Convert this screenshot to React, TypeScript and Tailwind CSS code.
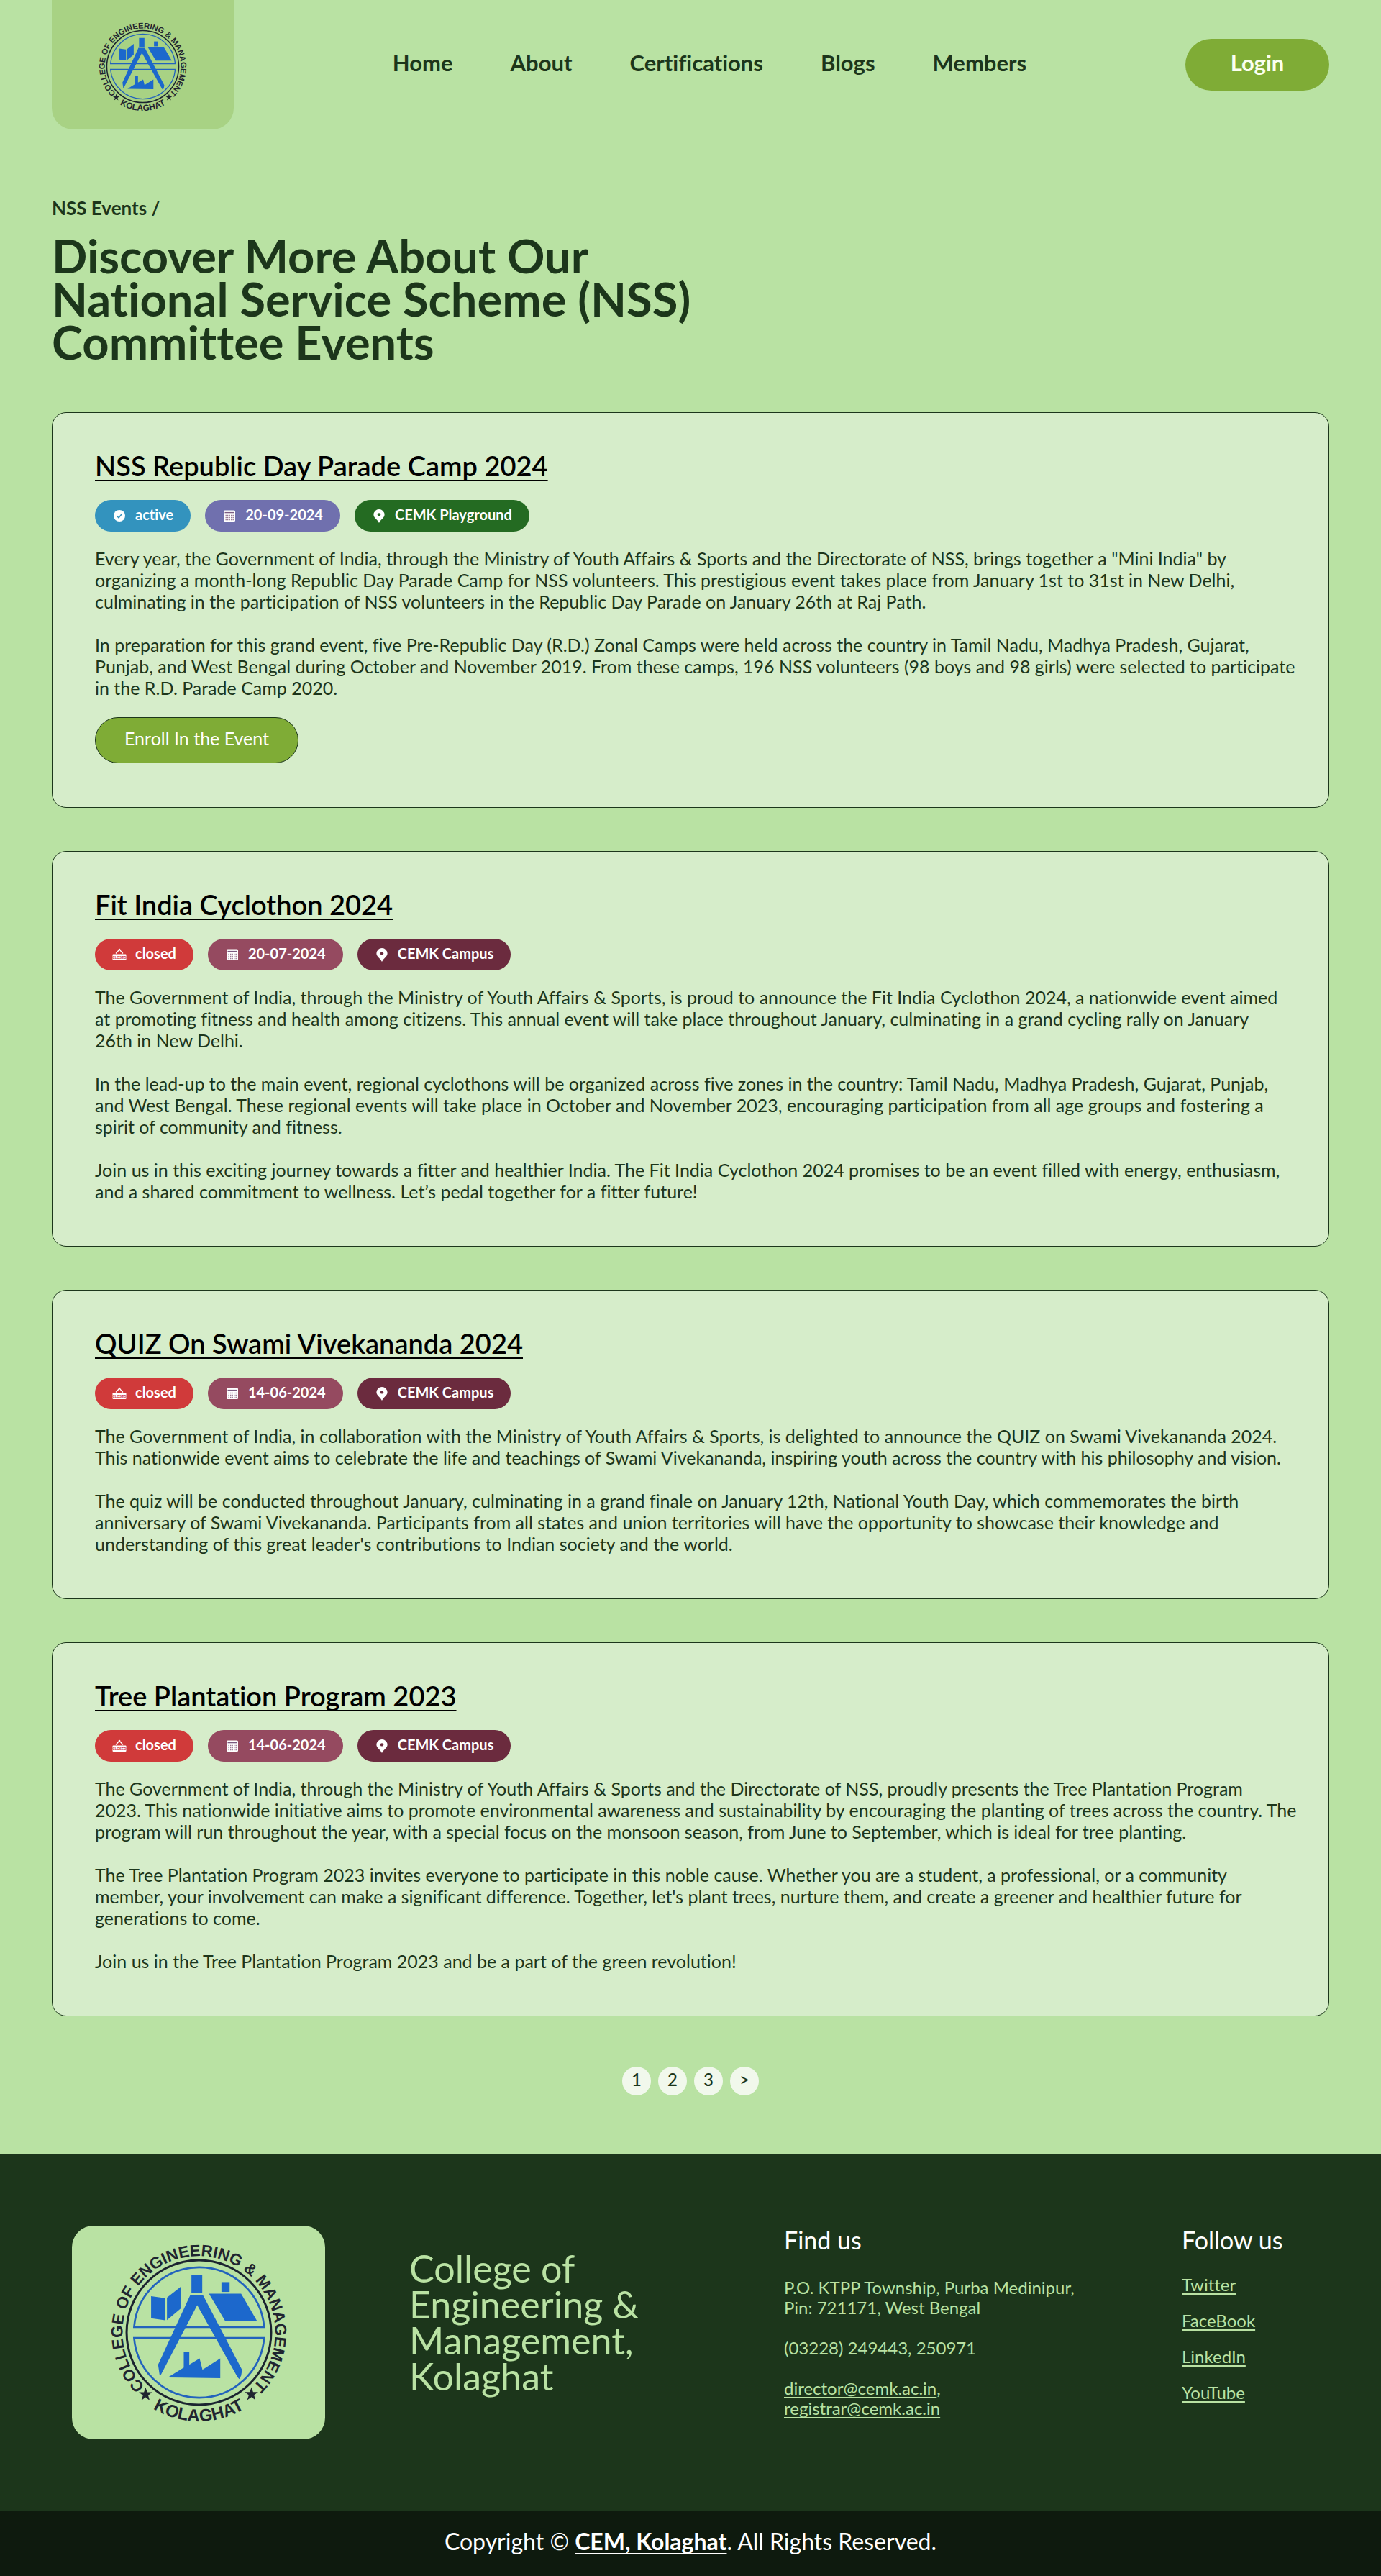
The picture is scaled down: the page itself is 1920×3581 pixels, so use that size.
import type { ReactNode } from 'react'

type EventItem = {
  title: string
  open: boolean
  date: string
  place: string
  paragraphs: string[]
}

const events: EventItem[] = [
  {
    title: 'NSS Republic Day Parade Camp 2024',
    open: true,
    date: '20-09-2024',
    place: 'CEMK Playground',
    paragraphs: [
      'Every year, the Government of India, through the Ministry of Youth Affairs & Sports and the Directorate of NSS, brings together a "Mini India" by\norganizing a month-long Republic Day Parade Camp for NSS volunteers. This prestigious event takes place from January 1st to 31st in New Delhi,\nculminating in the participation of NSS volunteers in the Republic Day Parade on January 26th at Raj Path.',
      'In preparation for this grand event, five Pre-Republic Day (R.D.) Zonal Camps were held across the country in Tamil Nadu, Madhya Pradesh, Gujarat,\nPunjab, and West Bengal during October and November 2019. From these camps, 196 NSS volunteers (98 boys and 98 girls) were selected to participate\nin the R.D. Parade Camp 2020.',
    ],
  },
  {
    title: 'Fit India Cyclothon 2024',
    open: false,
    date: '20-07-2024',
    place: 'CEMK Campus',
    paragraphs: [
      'The Government of India, through the Ministry of Youth Affairs & Sports, is proud to announce the Fit India Cyclothon 2024, a nationwide event aimed\nat promoting fitness and health among citizens. This annual event will take place throughout January, culminating in a grand cycling rally on January\n26th in New Delhi.',
      'In the lead-up to the main event, regional cyclothons will be organized across five zones in the country: Tamil Nadu, Madhya Pradesh, Gujarat, Punjab,\nand West Bengal. These regional events will take place in October and November 2023, encouraging participation from all age groups and fostering a\nspirit of community and fitness.',
      'Join us in this exciting journey towards a fitter and healthier India. The Fit India Cyclothon 2024 promises to be an event filled with energy, enthusiasm,\nand a shared commitment to wellness. Let’s pedal together for a fitter future!',
    ],
  },
  {
    title: 'QUIZ On Swami Vivekananda 2024',
    open: false,
    date: '14-06-2024',
    place: 'CEMK Campus',
    paragraphs: [
      'The Government of India, in collaboration with the Ministry of Youth Affairs & Sports, is delighted to announce the QUIZ on Swami Vivekananda 2024.\nThis nationwide event aims to celebrate the life and teachings of Swami Vivekananda, inspiring youth across the country with his philosophy and vision.',
      "The quiz will be conducted throughout January, culminating in a grand finale on January 12th, National Youth Day, which commemorates the birth\nanniversary of Swami Vivekananda. Participants from all states and union territories will have the opportunity to showcase their knowledge and\nunderstanding of this great leader's contributions to Indian society and the world.",
    ],
  },
  {
    title: 'Tree Plantation Program 2023',
    open: false,
    date: '14-06-2024',
    place: 'CEMK Campus',
    paragraphs: [
      'The Government of India, through the Ministry of Youth Affairs & Sports and the Directorate of NSS, proudly presents the Tree Plantation Program\n2023. This nationwide initiative aims to promote environmental awareness and sustainability by encouraging the planting of trees across the country. The\nprogram will run throughout the year, with a special focus on the monsoon season, from June to September, which is ideal for tree planting.',
      "The Tree Plantation Program 2023 invites everyone to participate in this noble cause. Whether you are a student, a professional, or a community\nmember, your involvement can make a significant difference. Together, let's plant trees, nurture them, and create a greener and healthier future for\ngenerations to come.",
      'Join us in the Tree Plantation Program 2023 and be a part of the green revolution!',
    ],
  },
]

function Logo({ id, className }: { id: string; className: string }) {
  return (
    <svg viewBox="189 126 800 800" className={className} role="img" aria-label="College of Engineering & Management, Kolaghat">
      <defs>
        <path id={`${id}-top`} d="M589 844 A318 318 0 0 1 589 208 A318 318 0 0 1 589 844" />
        <path id={`${id}-bottom`} d="M219 526 A370 370 0 0 0 959 526" />
      </defs>
      <circle cx="589" cy="526" r="301" fill="none" stroke="#1b2430" strokeWidth="9" />
      <g fill="none" stroke="#2263bd" strokeWidth="8">
        <path d="M319 503 H861 A272 272 0 0 0 319 503 Z" />
        <path d="M319 549 H861 A272 272 0 0 1 319 549 Z" />
      </g>
      <g fill="#1c68cc">
        <path d="M558 287 H603 V361 H558 Z" />
        <path d="M553 370 H606 L769 682 L765 706 L757 720 L750 712 L582 412 L432 700 L426 707 L419 660 Z" />
        <path d="M390 375 L449 383 V475 L390 467 Z" />
        <path d="M456 381 L513 336 V426 L456 474 Z" />
        <path d="M631 364 H765 L831 477 H698 Z" />
        <path d="M683 316 H717 V357 H683 Z" />
        <path d="M463 711 L526 672 V606 H549 V660 L592 634 L604 681 L678 634 V716 L463 713 Z" />
      </g>
      <g fill="#1f2530">
        <path d="M367 755 L374 775 L394 775 L378 788 L384 809 L367 796 L349 809 L356 788 L339 775 L360 775 Z" />
        <path d="M808 754 L815 774 L836 774 L819 787 L825 808 L808 795 L790 808 L797 787 L780 774 L801 774 Z" />
        <g fontFamily="'Liberation Sans', Arial, sans-serif" fontWeight="700" textAnchor="middle">
          <text fontSize="67">
            <textPath href={`#${id}-top`} startOffset="50%">COLLEGE OF ENGINEERING &amp; MANAGEMENT</textPath>
          </text>
          <text fontSize="72">
            <textPath href={`#${id}-bottom`} startOffset="50%">KOLAGHAT</textPath>
          </text>
        </g>
      </g>
    </svg>
  )
}

function CheckIcon() {
  return (
    <svg viewBox="0 0 20 20" className="size-5" aria-hidden="true">
      <circle cx="10" cy="10" r="8" fill="#fff" />
      <path d="M6.5 10.3 L9 12.8 L13.8 7" fill="none" stroke="#3393be" strokeWidth="1.5" />
    </svg>
  )
}

function ClosedIcon() {
  return (
    <svg viewBox="0 0 20 20" className="size-5" aria-hidden="true">
      <path d="M5 8.5 L10 3 L15 8.5" fill="none" stroke="#fff" strokeWidth="1.2" />
      <circle cx="10" cy="3" r="1.3" fill="#fff" />
      <rect x="0.5" y="9.5" width="19" height="8.5" rx="1" fill="#fff" />
      <text x="10" y="15.6" textAnchor="middle" fontSize="4.6" fontWeight="700" fontFamily="'Liberation Sans', Arial, sans-serif" fill="#d03a3a">
        CLOSED
      </text>
    </svg>
  )
}

function CalendarIcon() {
  return (
    <svg viewBox="0 0 20 20" className="size-5" aria-hidden="true">
      <rect x="2" y="2.5" width="16" height="15.5" rx="1.5" fill="#fff" />
      <path d="M3.5 5.6 H16.5" stroke="#7a5a80" strokeWidth="1.4" />
      <path d="M4.5 9.5 H16 M4.5 12.5 H16 M4.5 15.5 H16" stroke="#9a7a94" strokeWidth="1.4" strokeDasharray="1.4 1.1" />
    </svg>
  )
}

function PinIcon({ hole }: { hole: string }) {
  return (
    <svg viewBox="0 0 20 20" className="size-5" aria-hidden="true">
      <path d="M10 1 A7.6 7.6 0 0 1 17.6 8.6 C17.6 12.6 13 14.5 10 20 C7 14.5 2.4 12.6 2.4 8.6 A7.6 7.6 0 0 1 10 1 Z" fill="#fff" />
      <circle cx="10" cy="8.4" r="2.2" fill={hole} />
    </svg>
  )
}

function Pill({ icon, color, children }: { icon: ReactNode; color: string; children: ReactNode }) {
  return (
    <li className={`flex h-11 items-center gap-3 rounded-full px-6 text-xl font-bold text-white ${color}`}>
      {icon}
      <span className="pb-1">{children}</span>
    </li>
  )
}

function EventCard({ event }: { event: EventItem }) {
  return (
    <article className="rounded-[20px] border border-[#1c361b] bg-[#d6edca] pt-[53px] pr-8 pb-[61px] pl-[59px]">
      <h2 className="text-[38px] leading-10 font-semibold text-black">
        <a href="#" className="underline decoration-2 underline-offset-[5px] [text-decoration-skip-ink:none]">
          {event.title}
        </a>
      </h2>
      <ul className="mt-7 flex flex-wrap gap-5">
        <Pill icon={event.open ? <CheckIcon /> : <ClosedIcon />} color={event.open ? 'bg-[#3393be]' : 'bg-[#d03a3a]'}>
          {event.open ? 'active' : 'closed'}
        </Pill>
        <Pill icon={<CalendarIcon />} color={event.open ? 'bg-[#7070ae]' : 'bg-[#954a60]'}>
          {event.date}
        </Pill>
        <Pill icon={<PinIcon hole={event.open ? '#246b22' : '#6b2b3e'} />} color={event.open ? 'bg-[#246b22]' : 'bg-[#6b2b3e]'}>
          {event.place}
        </Pill>
      </ul>
      <div className="mt-[22px] flex flex-col gap-[30px] text-[25px] leading-[30px] whitespace-pre-line">
        {event.paragraphs.map((p) => (
          <p key={p}>{p}</p>
        ))}
      </div>
      {event.open && (
        <button className="mt-[26px] flex h-16 items-center rounded-full border border-[#1c361b] bg-[#7fac36] px-10 pb-1 text-[25px] text-white">
          Enroll In the Event
        </button>
      )}
    </article>
  )
}

const linkClass = 'underline underline-offset-[3px] [text-decoration-skip-ink:none]'

export default function App() {
  return (
    <div className="bg-[#b9e2a3] font-['Lato',sans-serif] text-[#1c361b] [font-variant-ligatures:none]">
      <header className="flex items-center justify-between px-[72px]">
        <a href="#" className="flex h-[180px] w-[253px] items-center justify-center rounded-b-[30px] bg-[#a8d284] pt-1">
          <Logo id="header-logo" className="size-[133px]" />
        </a>
        <nav className="flex gap-20 pb-1.5 text-[31px] leading-10 font-bold">
          <a href="#">Home</a>
          <a href="#">About</a>
          <a href="#">Certifications</a>
          <a href="#">Blogs</a>
          <a href="#">Members</a>
        </nav>
        <button className="h-[72px] w-[200px] rounded-full bg-[#7fac36] pb-1.5 text-[31px] font-bold text-[#fbfff0]">Login</button>
      </header>

      <main className="px-[72px] pt-[94px] pb-[81px]">
        <p className="text-[26px] leading-[30px] font-bold">NSS Events /</p>
        <h1 className="mt-[21px] max-w-[960px] text-[65px] leading-[60px] font-bold">
          Discover More About Our National Service Scheme (NSS) Committee Events
        </h1>
        <div className="mt-[68px] flex flex-col gap-[60px]">
          {events.map((event) => (
            <EventCard key={event.title} event={event} />
          ))}
        </div>
        <nav aria-label="Pages" className="mt-[70px] flex justify-center gap-2.5">
          {['1', '2', '3', '>'].map((label) => (
            <button key={label} className="flex size-10 items-center justify-center rounded-full bg-[#f1f8ec] pb-1 text-2xl font-medium">
              {label}
            </button>
          ))}
        </nav>
      </main>

      <footer className="bg-[#1c361b] text-[#b9e2a3]">
        <div className="grid grid-cols-[352px_404px_436px_1fr] items-start gap-[117px] p-[100px]">
          <div className="flex h-[297px] items-center justify-center rounded-[30px] bg-[#b9e2a3]">
            <Logo id="footer-logo" className="size-[267px]" />
          </div>
          <p className="mt-[34px] text-[52px] leading-[50px]">College of Engineering &amp; Management, Kolaghat</p>
          <section className="text-2xl leading-7">
            <h2 className="text-[34px] leading-10 text-white">Find us</h2>
            <address className="mt-8 flex flex-col gap-7 not-italic">
              <p>
                P.O. KTPP Township, Purba Medinipur,
                <br />
                Pin: 721171, West Bengal
              </p>
              <p>(03228) 249443, 250971</p>
              <p>
                <a href="mailto:director@cemk.ac.in" className={linkClass}>director@cemk.ac.in</a>,
                <br />
                <a href="mailto:registrar@cemk.ac.in" className={linkClass}>registrar@cemk.ac.in</a>
              </p>
            </address>
          </section>
          <section className="text-2xl leading-7">
            <h2 className="text-[34px] leading-10 whitespace-nowrap text-white">Follow us</h2>
            <ul className="mt-7 flex flex-col gap-[22px]">
              {['Twitter', 'FaceBook', 'LinkedIn', 'YouTube'].map((name) => (
                <li key={name}>
                  <a href="#" className={linkClass}>{name}</a>
                </li>
              ))}
            </ul>
          </section>
        </div>
        <div className="flex h-[90px] items-center justify-center bg-[#0e1a0e] pb-1.5 text-[32px] text-white">
          <p>
            Copyright ©{' '}
            <a href="#" className="font-bold underline decoration-2 underline-offset-4 [text-decoration-skip-ink:none]">CEM, Kolaghat</a>
            . All Rights Reserved.
          </p>
        </div>
      </footer>
    </div>
  )
}
